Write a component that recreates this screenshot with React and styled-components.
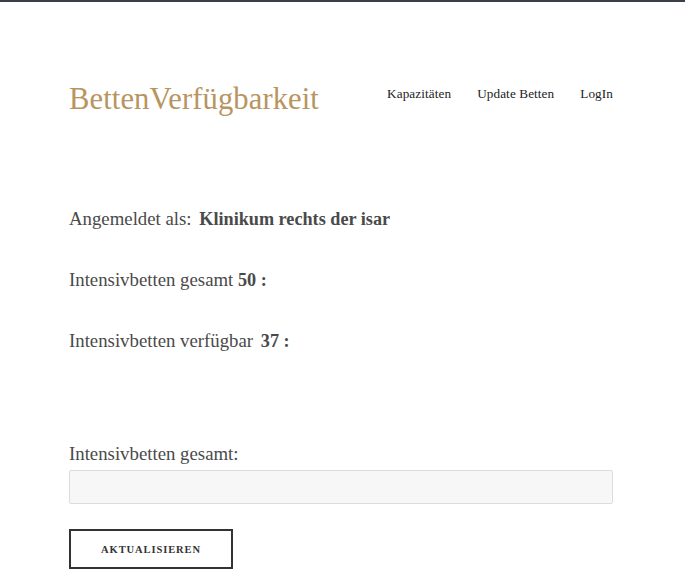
import styled, { createGlobalStyle } from "styled-components";

const GlobalStyle = createGlobalStyle`
  html, body {
    margin: 0;
    padding: 0;
    background: #fff;
  }
  body {
    font-family: "Liberation Serif", "DejaVu Serif", serif;
    color: #444;
  }
`;

const Page = styled.div`
  border-top: 2px solid #3b3f4a;
  min-height: 571px;
`;

const Container = styled.div`
  width: 544px;
  margin-left: 69px;
  padding-top: 78px;
`;

const Header = styled.header`
  display: flex;
  align-items: center;
  justify-content: space-between;
`;

const Logo = styled.a`
  font-size: 30.6px;
  color: #b8955f;
  text-decoration: none;
  letter-spacing: 0.1px;
  margin-top: 2px;
`;

const Nav = styled.nav`
  display: flex;
  gap: 26px;
  margin-top: -10px;
`;

const NavLink = styled.a`
  font-size: 13.2px;
  color: #222;
  text-decoration: none;
  letter-spacing: 0.1px;

  &:hover {
    cursor: pointer;
  }
`;

const Info = styled.section`
  display: flex;
  flex-direction: column;
  gap: 37px;
  margin-top: 90px;
`;

const Line = styled.p`
  margin: 0;
  font-size: 18.8px;
  line-height: 23px;
  color: #4a4a4a;
`;

const Strong = styled.b`
  font-weight: bold;
  font-size: 18.2px;
  margin-left: ${(p) => p.gap || 0}px;
`;

const Form = styled.form`
  margin-top: 89px;
  display: flex;
  flex-direction: column;
`;

const Label = styled.label`
  font-size: 18.8px;
  color: #4a4a4a;
  line-height: 23px;
`;

const Input = styled.input`
  box-sizing: border-box;
  width: 100%;
  height: 34px;
  margin-top: 5px;
  background: #f7f7f7;
  border: 1px solid #dcdcdc;
  border-radius: 2px;
  outline: none;
`;

const Button = styled.button`
  align-self: flex-start;
  margin-top: 25px;
  width: 164px;
  height: 40px;
  background: #fff;
  border: 2px solid #333;
  font-family: "Liberation Serif", "DejaVu Serif", serif;
  font-size: 10.5px;
  font-weight: bold;
  letter-spacing: 0.9px;
  color: #333;

  &:hover {
    cursor: pointer;
  }
`;

const App = () => {
  return (
    <Page>
      <GlobalStyle />
      <Container>
        <Header>
          <Logo href="#">BettenVerfügbarkeit</Logo>
          <Nav>
            <NavLink>Kapazitäten</NavLink>
            <NavLink>Update Betten</NavLink>
            <NavLink>LogIn</NavLink>
          </Nav>
        </Header>
        <Info>
          <Line>
            Angemeldet als: <Strong gap={3}>Klinikum rechts der isar</Strong>
          </Line>
          <Line>
            Intensivbetten gesamt <Strong>50 :</Strong>
          </Line>
          <Line>
            Intensivbetten verfügbar <Strong gap={3}>37 :</Strong>
          </Line>
        </Info>
        <Form onSubmit={(e) => e.preventDefault()}>
          <Label>Intensivbetten gesamt:</Label>
          <Input type="text" />
          <Button type="submit">AKTUALISIEREN</Button>
        </Form>
      </Container>
    </Page>
  );
};

export default App;
